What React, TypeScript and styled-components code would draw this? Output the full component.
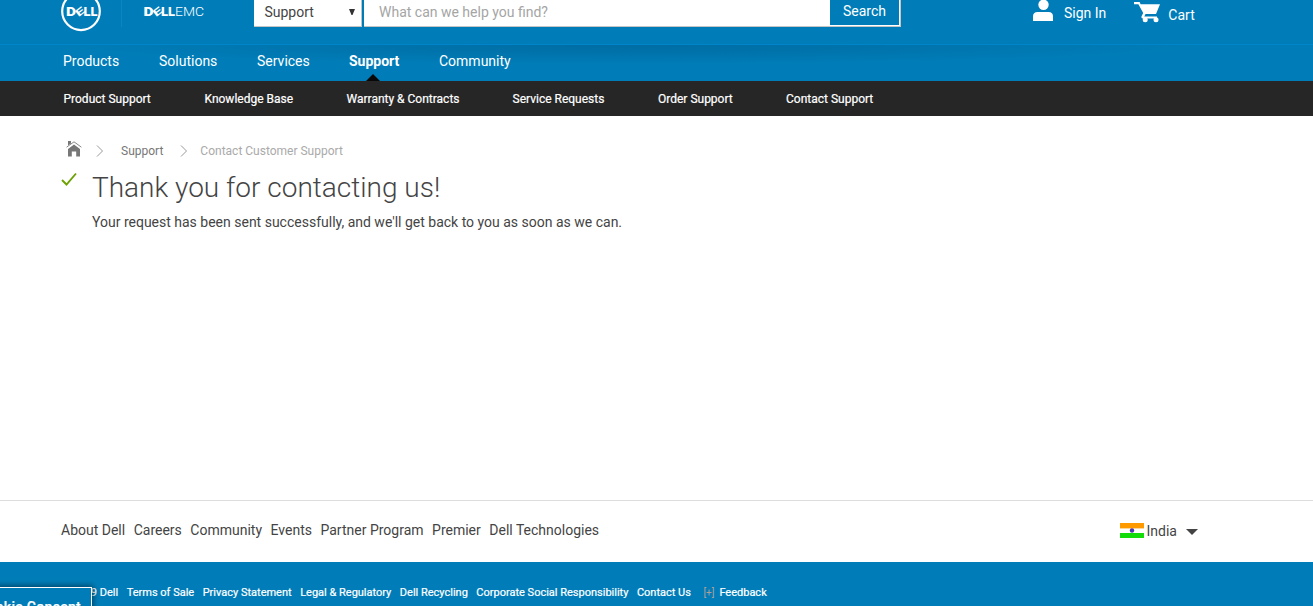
import React from 'react';
import styled, { createGlobalStyle } from 'styled-components';

const Global = createGlobalStyle`
  * { box-sizing: border-box; }
  body { margin: 0; background: #fff; overflow: hidden; font-family: Roboto, "Liberation Sans", sans-serif; color: #444; }
`;

const Page = styled.div`
  height: 606px;
  display: flex;
  flex-direction: column;
  overflow: hidden;
`;

const TopBar = styled.header`
  height: 44px;
  flex: none;
  display: flex;
  align-items: flex-start;
  background: #007db8;
  padding-left: 60px;
  color: #fff;
`;

const DellLogo = styled.svg`
  width: 42px;
  height: 32px;
  flex: none;
`;

const Divider = styled.div`
  width: 1px;
  height: 27px;
  margin: 0 21px 0 19px;
  background: #0a86c6;
`;

const EmcLogo = styled.svg`
  width: 62px;
  height: 27px;
  flex: none;
`;

const SearchForm = styled.div`
  display: flex;
  gap: 2px;
  height: 27px;
  margin-left: 49px;
`;

const ScopeSelect = styled.div`
  width: 108px;
  height: 27px;
  display: flex;
  align-items: center;
  justify-content: space-between;
  padding: 0 6px 2px 10.4px;
  background: #fff;
  border: solid #c4c4c4;
  border-width: 0 1px 1px 0;
  color: #444;
  font-size: 14px;
`;

const SearchBox = styled.div`
  width: 537px;
  height: 27px;
  display: flex;
  background: #fff;
  border: solid #c4c4c4;
  border-width: 0 1px 1px 0;
`;

const Placeholder = styled.span`
  flex: 1;
  padding-left: 15px;
  color: #a5a5a5;
  font-size: 14px;
  line-height: 24px;
`;

const SearchButton = styled.button`
  width: 69px;
  height: 25px;
  margin-right: 1px;
  padding: 0 0 3px;
  border: 0;
  background: #007db8;
  color: #fff;
  font: 400 14px Roboto, sans-serif;
`;

const Account = styled.div<{ $left: number; $gap: number; $top: number }>`
  display: flex;
  gap: ${p => p.$gap}px;
  margin-left: ${p => p.$left}px;
  font-size: 14px;
  line-height: 16px;
  span { margin-top: ${p => p.$top}px; }
  svg { flex: none; }
`;

const MainNav = styled.nav`
  height: 37px;
  flex: none;
  display: flex;
  padding-left: 63px;
  border-top: 1px solid #0085cb;
  background: radial-gradient(ellipse 590px 20px at 625px 0, #006da4, rgba(0, 109, 164, 0.6) 45%, rgba(0, 109, 164, 0)) #007db8;
`;

const NavItem = styled.a<{ $width: number; $active?: boolean }>`
  position: relative;
  width: ${p => p.$width}px;
  color: #fff;
  font-size: 14px;
  line-height: 32px;
  font-weight: ${p => (p.$active ? 700 : 400)};
`;

const Pointer = styled.svg`
  position: absolute;
  left: 17px;
  bottom: 0;
  width: 14px;
  height: 7px;
`;

const SubNav = styled.nav`
  height: 35px;
  flex: none;
  display: flex;
  padding-left: 63.5px;
  background: #262626;
`;

const SubItem = styled.a<{ $width: number }>`
  width: ${p => p.$width}px;
  color: #fff;
  font-size: 12px;
  line-height: 36px;
  white-space: nowrap;
  -webkit-text-stroke: 0.2px #fff;
`;

const Main = styled.main`
  flex: 1;
  padding: 24px 0 0 61px;
`;

const Breadcrumbs = styled.div`
  display: flex;
  align-items: center;
  height: 20px;
  padding-left: 5px;
  font-size: 12px;
  color: #aaa;
`;

const HomeIcon = styled.svg`
  width: 16px;
  height: 17px;
  margin-bottom: 3px;
`;

const Chevron = styled.svg<{ $left: number; $right: number }>`
  width: 8px;
  height: 12px;
  margin: 2px ${p => p.$right}px 0 ${p => p.$left}px;
`;

const Crumb = styled.span<{ $link?: boolean }>`
  margin-top: 2px;
  color: ${p => (p.$link ? '#777' : '#aaa')};
`;

const Message = styled.section`
  display: flex;
  gap: 15px;
  padding-top: 12px;
`;

const Check = styled.svg`
  width: 16px;
  height: 14px;
`;

const Title = styled.h1`
  margin: 0;
  font-size: 28px;
  line-height: 32px;
  font-weight: 300;
  color: #444;
`;

const Detail = styled.p`
  margin: 10px 0 0;
  font-size: 14px;
  line-height: 16px;
`;

const FooterLinks = styled.div`
  height: 62px;
  flex: none;
  display: flex;
  align-items: center;
  justify-content: space-between;
  padding: 0 115px 4px 61px;
  border-top: 1px solid #ddd;
  font-size: 14px;
`;

const LinkGroup = styled.div`
  display: flex;
  gap: 8.5px;
`;

const Country = styled.div`
  display: flex;
  align-items: center;
  margin-top: 2px;
`;

const Flag = styled.svg`
  width: 24px;
  height: 15px;
  margin-right: 3px;
`;

const Caret = styled.svg`
  width: 12px;
  height: 6px;
  margin: 2px 0 0 9px;
`;

const Legal = styled.footer`
  position: relative;
  height: 44px;
  flex: none;
  display: flex;
  gap: 8.5px;
  padding: 23px 0 0 72.3px;
  background: #007db8;
  color: #fff;
  font-size: 11px;
  line-height: 16px;
  white-space: nowrap;
  -webkit-text-stroke: 0.2px #fff;
`;

const Feedback = styled.span`
  display: flex;
  gap: 5px;
  margin-left: 4px;
  i { color: #b3a09a; font-style: normal; font-size: 10px; -webkit-text-stroke: 0; }
`;

const CookieTab = styled.div`
  position: absolute;
  left: -40px;
  top: 25px;
  width: 132px;
  height: 36px;
  padding: 11px 10px 0 0;
  border: 1px solid #fff;
  background: #007db8;
  box-shadow: 0 0 6px 1px rgba(0, 0, 0, 0.5);
  text-align: right;
  font-size: 14px;
  font-weight: 500;
  letter-spacing: 0.3px;
`;

const navItems = [
  { label: 'Products', width: 96 },
  { label: 'Solutions', width: 98 },
  { label: 'Services', width: 92 },
  { label: 'Support', width: 90, active: true },
  { label: 'Community', width: 90 },
];

const subItems = [
  { label: 'Product Support', width: 141 },
  { label: 'Knowledge Base', width: 142 },
  { label: 'Warranty & Contracts', width: 166 },
  { label: 'Service Requests', width: 145.5 },
  { label: 'Order Support', width: 128 },
  { label: 'Contact Support', width: 100 },
];

const footerItems = ['About Dell', 'Careers', 'Community', 'Events', 'Partner Program', 'Premier', 'Dell Technologies'];
const legalItems = ['2019 Dell', 'Terms of Sale', 'Privacy Statement', 'Legal & Regulatory', 'Dell Recycling', 'Corporate Social Responsibility', 'Contact Us'];

function Wordmark({ x, y }: { x: number; y: number }) {
  return (
    <g transform={`translate(${x} ${y})`} fill="#fff" fontFamily="Roboto, sans-serif" fontWeight="900" fontSize="12.3">
      <text x="0" y="0" textLength="10" lengthAdjust="spacingAndGlyphs">D</text>
      <text transform="translate(14 -4.4) rotate(-38)" x="-4.6" y="3.5" fontSize="9.8" fontWeight="700" textLength="9.2" lengthAdjust="spacingAndGlyphs">E</text>
      <text x="17.4" y="0" textLength="14" lengthAdjust="spacingAndGlyphs">LL</text>
    </g>
  );
}

function ChevronIcon({ left, right }: { left: number; right: number }) {
  return (
    <Chevron $left={left} $right={right} viewBox="0 0 8 12">
      <path d="M1 .5 6.5 6 1 11.5" fill="none" stroke="#999" />
    </Chevron>
  );
}

export default function App() {
  return (
    <Page>
      <Global />
      <TopBar>
        <DellLogo viewBox="0 0 42 32">
          <circle cx="21" cy="11.3" r="18.8" fill="none" stroke="#fff" strokeWidth="2.2" />
          <Wordmark x={6} y={16} />
        </DellLogo>
        <Divider />
        <EmcLogo viewBox="0 0 62 27">
          <Wordmark x={0.5} y={16} />
          <text x="32" y="16" fill="#fff" fontFamily="Roboto, sans-serif" fontWeight="300" fontSize="13" textLength="29" lengthAdjust="spacingAndGlyphs">EMC</text>
        </EmcLogo>
        <SearchForm>
          <ScopeSelect>
            Support
            <svg width="6" height="6" viewBox="0 0 6 6"><path d="M0 0h6L3.5 6h-1z" fill="#333" /></svg>
          </ScopeSelect>
          <SearchBox>
            <Placeholder>What can we help you find?</Placeholder>
            <SearchButton>Search</SearchButton>
          </SearchBox>
        </SearchForm>
        <Account $left={132} $gap={10} $top={5}>
          <svg width="21" height="22" viewBox="0 0 21 22" fill="#fff">
            <circle cx="10.5" cy="4.8" r="5.2" />
            <path d="M0 21v-4.5q0-4.5 4.5-4.5h11q4.5 0 4.5 4.5V21z" />
          </svg>
          <span>Sign In</span>
        </Account>
        <Account $left={28} $gap={8} $top={7}>
          <svg width="26" height="23" viewBox="0 0 26 23" fill="#fff">
            <path d="M0 2h5.6l1 2.2H26L22 14H11.5l-1.2 2.4H23v2.2H9q-2.4-.4-1.2-2.8L9.2 13 4.4 4.2H0z" />
            <circle cx="11.2" cy="19.8" r="2.5" />
            <circle cx="22" cy="19.8" r="2.5" />
          </svg>
          <span>Cart</span>
        </Account>
      </TopBar>
      <MainNav>
        {navItems.map(item => (
          <NavItem key={item.label} $width={item.width} $active={item.active}>
            {item.label}
            {item.active && <Pointer viewBox="0 0 14 7"><path d="M0 7 7 0l7 7z" fill="#080808" /></Pointer>}
          </NavItem>
        ))}
      </MainNav>
      <SubNav>
        {subItems.map(item => <SubItem key={item.label} $width={item.width}>{item.label}</SubItem>)}
      </SubNav>
      <Main>
        <Breadcrumbs>
          <HomeIcon viewBox="0 0 16 17">
            <path d="M2 16.5V9l6-4.5L14 9v7.5h-3.8v-5H5.8v5z" fill="#777" />
            <path d="M2 1h3v2.4L2 5.6z" fill="#777" />
            <path d="M.6 7.2 8 1.8l7.4 5.4" fill="none" stroke="#888" />
          </HomeIcon>
          <ChevronIcon left={14} right={17} />
          <Crumb $link>Support</Crumb>
          <ChevronIcon left={17} right={12} />
          <Crumb>Contact Customer Support</Crumb>
        </Breadcrumbs>
        <Message>
          <Check viewBox="0 0 16 14"><path d="m1 8 4.5 4.5L15 1.5" fill="none" stroke="#6ea204" strokeWidth="1.9" /></Check>
          <div>
            <Title>Thank you for contacting us!</Title>
            <Detail>Your request has been sent successfully, and we'll get back to you as soon as we can.</Detail>
          </div>
        </Message>
      </Main>
      <FooterLinks>
        <LinkGroup>{footerItems.map(label => <span key={label}>{label}</span>)}</LinkGroup>
        <Country>
          <Flag viewBox="0 0 24 15">
            <path fill="#fff" d="M0 0h24v15H0z" />
            <path fill="#ff9900" d="M0 0h24v5H0z" />
            <path fill="#ffd699" d="M0 5h24v1H0z" />
            <path fill="#14dc0a" d="M0 10h24v5H0z" />
            <circle cx="12" cy="7.5" r="2.2" fill="#4936b0" />
          </Flag>
          India
          <Caret viewBox="0 0 12 6"><path d="M0 0h12L6 6z" fill="#444" /></Caret>
        </Country>
      </FooterLinks>
      <Legal>
        {legalItems.map(label => <span key={label}>{label}</span>)}
        <Feedback><i>[+]</i>Feedback</Feedback>
        <CookieTab>Cookie Consent</CookieTab>
      </Legal>
    </Page>
  );
}
